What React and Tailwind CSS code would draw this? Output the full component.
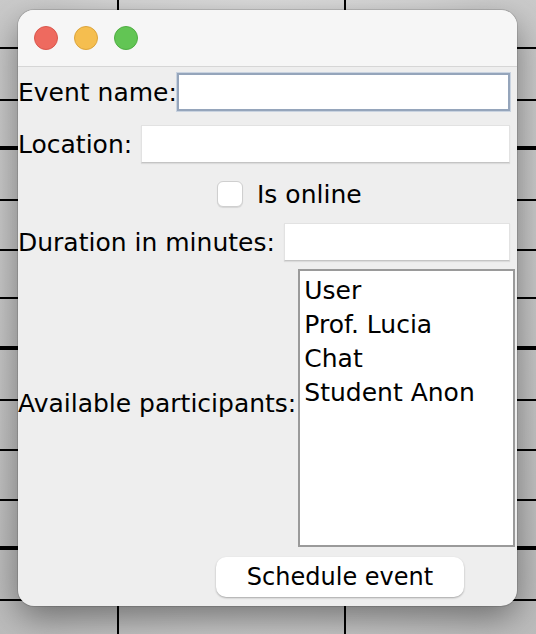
import React from 'react'

const hLines = [
  { y: 48, w: 2 }, { y: 100, w: 2 }, { y: 148, w: 4 }, { y: 200, w: 2 },
  { y: 250, w: 2 }, { y: 298, w: 2 }, { y: 348, w: 4 }, { y: 400, w: 2 },
  { y: 450, w: 2 }, { y: 500, w: 2 }, { y: 548, w: 4 }, { y: 600, w: 2 },
]

function Backdrop() {
  return (
    <svg className="absolute inset-0" width="536" height="634" viewBox="0 0 536 634">
      {hLines.map(l => (
        <line key={l.y} x1="0" x2="536" y1={l.y} y2={l.y} stroke="#000" strokeWidth={l.w} />
      ))}
      <line x1="118" x2="118" y1="0" y2="634" stroke="#000" strokeWidth="2" />
      <line x1="345" x2="345" y1="0" y2="634" stroke="#000" strokeWidth="2" />
    </svg>
  )
}

function Field({ focused }) {
  return (
    <div
      className={
        'flex-1 h-[38px] bg-white ' +
        (focused
          ? 'border-2 border-[#95a5bb] shadow-[0_0_0_1px_#c9d3e0]'
          : 'border border-[#e2e2e2] border-b-[#c4c4c4] shadow-[0_1px_1px_rgba(0,0,0,0.08)]')
      }
    />
  )
}

export default function App() {
  const people = ['User', 'Prof. Lucia', 'Chat', 'Student Anon']

  return (
    <div
      className="relative w-[536px] h-[634px] overflow-hidden bg-[radial-gradient(ellipse_at_50%_20%,#e4e4e4_0%,#d8d8d8_45%,#bdbdbd_100%)]"
      style={{ fontFamily: '"DejaVu Sans", "Liberation Sans", sans-serif' }}
    >
      <Backdrop />

      <div className="relative ml-[18px] mt-[10px] w-[499px] h-[596px] rounded-[16px] overflow-hidden bg-[#eeeeee] shadow-[0_12px_36px_rgba(0,0,0,0.45),0_0_0_1px_rgba(0,0,0,0.12)]">
        {/* title bar */}
        <div className="h-[57px] bg-[#f6f6f6] border-b border-[#d6d6d6] flex items-center gap-[16px] pl-[16px]">
          <span className="w-[24px] h-[24px] rounded-full bg-[#ee6a5f] border border-[#d9574d]" />
          <span className="w-[24px] h-[24px] rounded-full bg-[#f5be4f] border border-[#dba43c]" />
          <span className="w-[24px] h-[24px] rounded-full bg-[#62c554] border border-[#4fad43]" />
        </div>

        <div className="text-[25px] text-black leading-none">
          <div className="flex items-center h-[40px] mt-[5px] pr-[7px]">
            <span className="pr-0">Event name:</span>
            <Field focused />
          </div>

          <div className="flex items-center h-[38px] mt-[13px] pr-[7px]">
            <span className="pr-[9px]">Location:</span>
            <Field />
          </div>

          <div className="flex items-center h-[28px] mt-[17px] pl-[199px]">
            <span className="w-[26px] h-[26px] rounded-[6px] bg-white border border-[#cfcfcf] shadow-[0_1px_1px_rgba(0,0,0,0.1)]" />
            <span className="ml-[14px]">Is online</span>
          </div>

          <div className="flex items-center h-[38px] mt-[15px] pr-[7px]">
            <span className="pr-[9px]">Duration in minutes:</span>
            <Field />
          </div>

          <div className="flex items-center h-[278px] mt-[8px] pr-[2px]">
            <span className="pr-[2px] pb-[10px]">Available participants:</span>
            <div className="flex-1 h-full bg-white border-2 border-[#9a9a9a] pl-[4px] pt-[2px]">
              {people.map(p => (
                <div key={p} className="h-[34px] flex items-center">{p}</div>
              ))}
            </div>
          </div>

          <div className="mt-[10px] ml-[198px] w-[248px] h-[40px] rounded-[10px] bg-white shadow-[0_1px_2px_rgba(0,0,0,0.3)] flex items-center justify-center text-[24px]">
            Schedule event
          </div>
        </div>
      </div>
    </div>
  )
}
